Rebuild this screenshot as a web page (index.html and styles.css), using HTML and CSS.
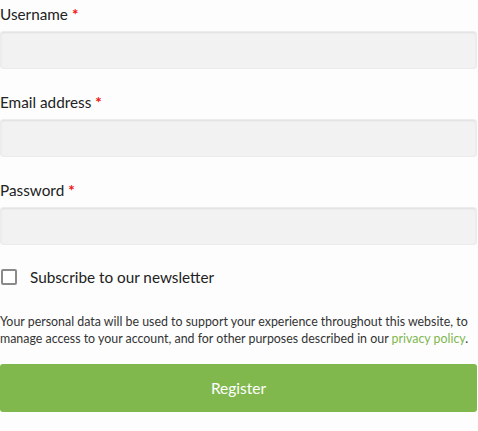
FILE: index.html
```html
<!DOCTYPE html>
<html>
<head>
<meta charset="utf-8">
<link rel="stylesheet" href="styles.css">
</head>
<body>
<form class="register">
  <div class="row">
    <label class="label">Username <span class="req">*</span></label>
    <input class="field" type="text">
  </div>
  <div class="row">
    <label class="label">Email address <span class="req">*</span></label>
    <input class="field" type="email">
  </div>
  <div class="row">
    <label class="label">Password <span class="req">*</span></label>
    <input class="field" type="password">
  </div>
  <label class="check">
    <span class="box"></span>
    <span class="check-text">Subscribe to our newsletter</span>
  </label>
  <p class="privacy">Your personal data will be used to support your experience throughout this website, to manage access to your account, and for other purposes described in our <a href="#" class="link">privacy policy</a>.</p>
  <button class="btn" type="button">Register</button>
</form>
</body>
</html>
```
FILE: styles.css
```css
html, body {
  margin: 0;
  padding: 0;
  background: #fdfdfd;
}
body {
  font-family: Lato, "Open Sans", sans-serif;
  color: #222;
}
.register {
  width: 477px;
  display: flex;
  flex-direction: column;
}
.row {
  display: flex;
  flex-direction: column;
  margin-bottom: 19px;
}
.label {
  font-size: 15.3px;
  line-height: 28px;
  height: 28px;
  margin-bottom: 3px;
  color: #222;
}
.req {
  position: relative;
  top: 0;
  color: #f01010;
  font-weight: bold;
}
.field {
  box-sizing: border-box;
  height: 38px;
  width: 100%;
  margin: 0;
  border: 1px solid #ececec;
  border-radius: 3px;
  background: #f2f2f2;
  box-shadow: inset 0 1px 2px rgba(0,0,0,0.08);
  outline: none;
}
.check {
  display: flex;
  align-items: center;
  height: 24px;
  margin-top: 1px;
}
.box {
  box-sizing: border-box;
  width: 16px;
  height: 16px;
  margin-left: 1px;
  border: 2px solid #8a8a8a;
  border-radius: 2px;
  background: #fff;
}
.check-text {
  margin-left: 13px;
  font-size: 15.3px;
  color: #222;
}
.privacy {
  margin: 24px 0 0;
  font-size: 12.4px;
  line-height: 17px;
  color: #333;
}
.link {
  color: #7fb74f;
  text-decoration: none;
}
.btn {
  margin-top: 17px;
  height: 48px;
  width: 100%;
  border: none;
  border-radius: 3px;
  background: #80b84e;
  color: #fff;
  font-family: inherit;
  font-size: 15.5px;
}
```
